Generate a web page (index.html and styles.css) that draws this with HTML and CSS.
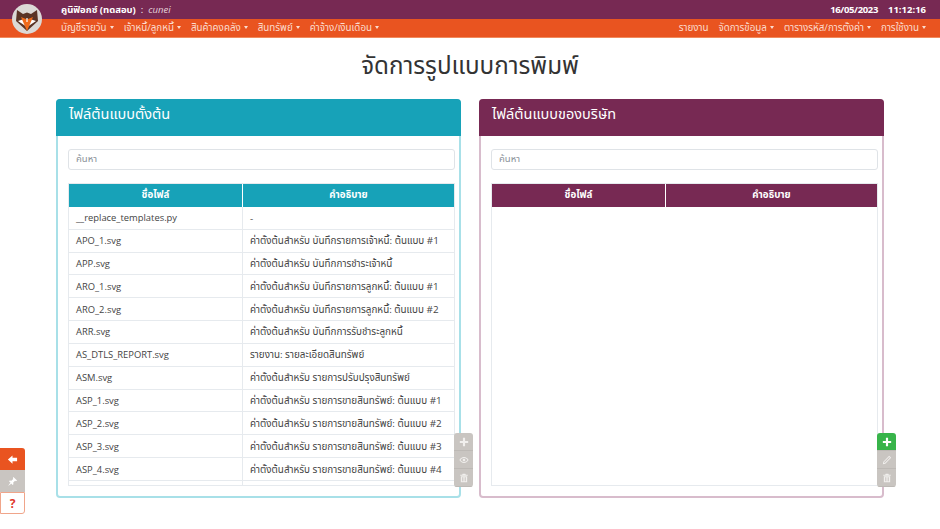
FILE: index.html
```html
<!DOCTYPE html>
<html lang="th">
<head>
    <meta charset="UTF-8">
    <meta name="viewport" content="width=device-width, initial-scale=1.0">
    <title>จัดการรูปแบบการพิมพ์</title>
    <link rel="stylesheet" href="styles.css">
</head>
<body>
    <div class="logo">
        <svg viewBox="0 0 30 30" width="30" height="30">
            <circle cx="15" cy="15" r="15" fill="#dcd9d6"/>
            <path d="M5 6 L11 10 L15 8.5 L19 10 L25 6 L26 17 L15 27 L4 17 Z" fill="#5a3426"/>
            <path d="M6 17 L12 15 L15 20 L15 23 Z M24 17 L18 15 L15 20 L15 23 Z" fill="#fff"/>
            <path d="M9 13 L15 15.5 L21 13 L18 20 L15 27 L12 20 Z" fill="#ef6a1a"/>
            <path d="M14.4 14 h1.2 v4 h-1.2 Z" fill="#fff"/>
        </svg>
    </div>

    <div class="topbar">
        <div class="company"><b>คูนิฟิอกซ์ (ทดสอบ)</b><span class="sep">:</span><i>cunei</i></div>
        <div class="clock"><span class="date">16/05/2023</span><span>11:12:16</span></div>
    </div>
    <div class="navbar">
        <div class="menu">
            <a class="drop">บัญชีรายวัน</a>
            <a class="drop">เจ้าหนี้/ลูกหนี้</a>
            <a class="drop">สินค้าคงคลัง</a>
            <a class="drop">สินทรัพย์</a>
            <a class="drop">ค่าจ้าง/เงินเดือน</a>
        </div>
        <div class="menu">
            <a>รายงาน</a>
            <a class="drop">จัดการข้อมูล</a>
            <a class="drop">ตารางรหัส/การตั้งค่า</a>
            <a class="drop">การใช้งาน</a>
        </div>
    </div>

    <h1 class="title">จัดการรูปแบบการพิมพ์</h1>

    <div class="panels">
        <div class="panel panel-info">
            <div class="panel-head">ไฟล์ต้นแบบตั้งต้น</div>
            <div class="panel-body">
                <input class="search" type="text" placeholder="ค้นหา">
                <div class="table-box">
                    <table>
                        <thead>
                            <tr><th>ชื่อไฟล์</th><th>คำอธิบาย</th></tr>
                        </thead>
                        <tbody>
                            <tr><td>__replace_templates.py</td><td>-</td></tr>
                            <tr><td>APO_1.svg</td><td>ค่าตั้งต้นสำหรับ บันทึกรายการเจ้าหนี้: ต้นแบบ #1</td></tr>
                            <tr><td>APP.svg</td><td>ค่าตั้งต้นสำหรับ บันทึกการชำระเจ้าหนี้</td></tr>
                            <tr><td>ARO_1.svg</td><td>ค่าตั้งต้นสำหรับ บันทึกรายการลูกหนี้: ต้นแบบ #1</td></tr>
                            <tr><td>ARO_2.svg</td><td>ค่าตั้งต้นสำหรับ บันทึกรายการลูกหนี้: ต้นแบบ #2</td></tr>
                            <tr><td>ARR.svg</td><td>ค่าตั้งต้นสำหรับ บันทึกการรับชำระลูกหนี้</td></tr>
                            <tr><td>AS_DTLS_REPORT.svg</td><td>รายงาน: รายละเอียดสินทรัพย์</td></tr>
                            <tr><td>ASM.svg</td><td>ค่าตั้งต้นสำหรับ รายการปรับปรุงสินทรัพย์</td></tr>
                            <tr><td>ASP_1.svg</td><td>ค่าตั้งต้นสำหรับ รายการขายสินทรัพย์: ต้นแบบ #1</td></tr>
                            <tr><td>ASP_2.svg</td><td>ค่าตั้งต้นสำหรับ รายการขายสินทรัพย์: ต้นแบบ #2</td></tr>
                            <tr><td>ASP_3.svg</td><td>ค่าตั้งต้นสำหรับ รายการขายสินทรัพย์: ต้นแบบ #3</td></tr>
                            <tr><td>ASP_4.svg</td><td>ค่าตั้งต้นสำหรับ รายการขายสินทรัพย์: ต้นแบบ #4</td></tr>
                            <tr><td>ASP_5.svg</td><td>ค่าตั้งต้นสำหรับ รายการขายสินทรัพย์: ต้นแบบ #5</td></tr>
                        </tbody>
                    </table>
                </div>
            </div>
            <div class="tools">
                <span class="tool"><svg viewBox="0 0 12 12"><use href="#i-plus"/></svg></span>
                <span class="tool"><svg viewBox="0 0 12 12"><use href="#i-eye"/></svg></span>
                <span class="tool"><svg viewBox="0 0 12 12"><use href="#i-trash"/></svg></span>
            </div>
        </div>

        <div class="panel panel-brand">
            <div class="panel-head">ไฟล์ต้นแบบของบริษัท</div>
            <div class="panel-body">
                <input class="search" type="text" placeholder="ค้นหา">
                <div class="table-box">
                    <table>
                        <thead>
                            <tr><th>ชื่อไฟล์</th><th>คำอธิบาย</th></tr>
                        </thead>
                    </table>
                </div>
            </div>
            <div class="tools">
                <span class="tool tool-add"><svg viewBox="0 0 12 12"><use href="#i-plus"/></svg></span>
                <span class="tool"><svg viewBox="0 0 12 12"><use href="#i-pen"/></svg></span>
                <span class="tool"><svg viewBox="0 0 12 12"><use href="#i-trash"/></svg></span>
            </div>
        </div>
    </div>

    <div class="side-btns">
        <span class="side-btn side-back"><svg viewBox="0 0 12 12"><path d="M1 6 L6 1.5 V4 H11 V8 H6 V10.5 Z"/></svg></span>
        <span class="side-btn side-pin"><svg viewBox="0 0 12 12"><path d="M7 1 L11 5 L9.8 5.6 L8.8 5.2 L6.8 7.2 L7 9 L6.2 9.8 L2.2 5.8 L3 5 L4.8 5.2 L6.8 3.2 L6.4 2.2 Z M3.6 7.4 L4.6 8.4 L1.2 11 Z"/></svg></span>
        <span class="side-btn side-help">?</span>
    </div>

    <svg class="icon-defs" width="0" height="0">
        <defs>
            <path id="i-plus" d="M4.7 1 H7.3 V4.7 H11 V7.3 H7.3 V11 H4.7 V7.3 H1 V4.7 H4.7 Z"/>
            <path id="i-eye" fill-rule="evenodd" d="M6 2.5 C8.5 2.5 10.5 4.2 11.5 6 C10.5 7.8 8.5 9.5 6 9.5 C3.5 9.5 1.5 7.8 .5 6 C1.5 4.2 3.5 2.5 6 2.5 Z M6 3.6 C4.2 3.6 2.7 4.7 1.8 6 C2.7 7.3 4.2 8.4 6 8.4 C7.8 8.4 9.3 7.3 10.2 6 C9.3 4.7 7.8 3.6 6 3.6 Z M6 4.4 A1.6 1.6 0 1 1 6 7.6 A1.6 1.6 0 1 1 6 4.4 Z"/>
            <path id="i-trash" fill-rule="evenodd" d="M4.4 1 H7.6 L8.2 2 H10.5 V3.2 H1.5 V2 H3.8 Z M2.2 3.8 H9.8 V11 H2.2 Z M3.8 5 V9.8 H4.7 V5 Z M5.6 5 V9.8 H6.4 V5 Z M7.3 5 V9.8 H8.2 V5 Z"/>
            <path id="i-pen" fill-rule="evenodd" d="M8.6 1 L11 3.4 L4 10.4 L1 11 L1.6 8 Z M8.6 2.5 L2.6 8.5 L2.4 9.6 L3.5 9.4 L9.5 3.4 Z"/>
        </defs>
    </svg>
</body>
</html>
```

FILE: styles.css
```css
* {
    box-sizing: border-box;
}
body {
    margin: 0;
    height: 529px;
    overflow: hidden;
    font-family: "Open Sans", "Noto Sans", "Noto Sans Thai", sans-serif;
    font-size: 9.8px;
    color: #333;
    background-color: #fff;
}
.logo {
    position: absolute;
    top: 4px;
    left: 12px;
    width: 30px;
    height: 30px;
}
.topbar {
    display: flex;
    justify-content: space-between;
    align-items: center;
    height: 19px;
    padding: 0 14px 0 61px;
    background-color: #772953;
    color: #fff;
    font-size: 9.5px;
}
.company b {
    font-weight: 700;
}
.company i {
    font-size: 9.5px;
    color: #e4d4dc;
}
.sep {
    margin: 0 5px;
}
.clock {
    display: flex;
    gap: 10px;
    font-weight: 700;
}
.date {
    letter-spacing: -.35px;
}
.navbar {
    display: flex;
    justify-content: space-between;
    align-items: center;
    height: 19px;
    padding: 0 14px 0 61px;
    background-color: #e95420;
    border-bottom: 1px solid #f08a5d;
    color: #fbdccf;
}
.menu {
    display: flex;
    gap: 10px;
}
.drop::after {
    content: "";
    display: inline-block;
    margin-left: 3px;
    vertical-align: 2px;
    border-top: 3px solid;
    border-left: 2.5px solid transparent;
    border-right: 2.5px solid transparent;
}
.title {
    margin: 0;
    padding-top: 9px;
    height: 61px;
    text-align: center;
    font-size: 24.2px;
    font-weight: 400;
    line-height: 36px;
}
.panels {
    display: flex;
    gap: 18px;
    padding: 0 56px;
}
.panel {
    position: relative;
    width: 405px;
    height: 399px;
    border: 2px solid;
    border-radius: 4px;
}
.panel-info {
    border-color: #a8e0e8;
}
.panel-brand {
    border-color: #d8bccc;
}
.panel-head {
    height: 37px;
    margin: -2px -2px 0;
    padding: 4px 13px 0;
    border-radius: 4px 4px 0 0;
    color: #fff;
    font-size: 14.5px;
    line-height: 22px;
}
.panel-info .panel-head,
.panel-info th {
    background-color: #17a2b8;
}
.panel-brand .panel-head,
.panel-brand th {
    background-color: #772953;
}
.panel-body {
    display: flex;
    flex-direction: column;
    gap: 13px;
    padding: 13px 4px 0 10px;
}
.search {
    height: 21px;
    width: 100%;
    padding: 0 7px 2px;
    border: 1px solid #dfe3e7;
    border-radius: 3px;
    font-family: inherit;
    font-size: 9.5px;
}
.search::placeholder {
    color: #8a9299;
}
.table-box {
    height: 303px;
    overflow: hidden;
    border: 1px solid #e6eaee;
}
table {
    width: 100%;
    table-layout: fixed;
    border-collapse: separate;
    border-spacing: 0;
}
th {
    height: 22.85px;
    color: #fff;
    font-size: 9.8px;
    font-weight: 700;
    border-right: 1px solid #fff;
    padding: 0 0 1px;
}
th:first-child,
td:first-child {
    width: 174px;
}
th:last-child {
    border-right: none;
}
td {
    height: 22.85px;
    padding: 0 7px;
    border-bottom: 1px solid #e6eaee;
    color: #444;
    font-size: 9.85px;
    white-space: nowrap;
}
td:first-child {
    border-right: 1px solid #e6eaee;
    font-size: 9.4px;
}
.tools {
    position: absolute;
    top: 332px;
    right: -14px;
    display: flex;
    flex-direction: column;
    width: 19px;
    border-radius: 3px;
    overflow: hidden;
}
.tool {
    display: flex;
    justify-content: center;
    align-items: center;
    height: 18px;
    background-color: #c9c5c1;
    border-bottom: 1px solid #bdb9b5;
}
.tool svg {
    width: 10px;
    height: 10px;
    fill: #f1efed;
}
.tool-add {
    background-color: #38b44a;
}
.tool-add svg {
    fill: #fff;
}
.side-btns {
    position: absolute;
    left: 0;
    top: 448px;
    display: flex;
    flex-direction: column;
    width: 25px;
}
.side-btn {
    display: flex;
    justify-content: center;
    align-items: center;
    height: 22px;
}
.side-btn svg {
    width: 11px;
    height: 11px;
    fill: #fff;
}
.side-back {
    background-color: #e95420;
    border-radius: 0 3px 0 0;
}
.side-pin {
    background-color: #c9c5c1;
}
.side-help {
    border: 1px solid #f0a58a;
    border-radius: 0 0 3px 0;
    color: #df382c;
    font-size: 12px;
    font-weight: 700;
}
.icon-defs {
    position: absolute;
}
```
